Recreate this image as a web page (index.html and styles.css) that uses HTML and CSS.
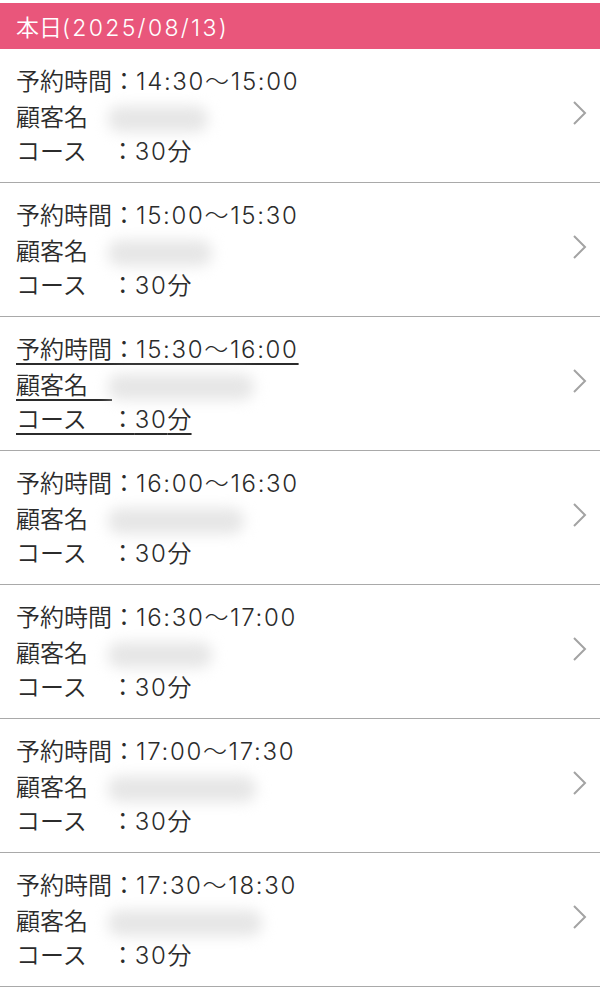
FILE: index.html
```html
<!DOCTYPE html>
<html lang="ja">
<head>
    <meta charset="UTF-8">
    <meta name="viewport" content="width=device-width, initial-scale=1.0">
    <title>本日の予約</title>
    <link rel="stylesheet" href="styles.css">
</head>
<body>
    <!-- 本日の予約一覧 -->
    <div class="day-header">本日<span class="val">(2025/08/13)</span></div>

    <ul class="reserve-list">
        <li class="reserve-item">
            <div class="reserve-info">
                <p>予約時間：<span class="val">14:30〜15:00</span></p>
                <p>顧客名　<span class="masked" style="width: 100px"></span></p>
                <p>コース　：<span class="val">30</span>分</p>
            </div>
            <svg class="chevron" viewBox="0 0 16 26"><polyline points="2,2 13,13 2,24"/></svg>
        </li>
        <li class="reserve-item">
            <div class="reserve-info">
                <p>予約時間：<span class="val">15:00〜15:30</span></p>
                <p>顧客名　<span class="masked" style="width: 104px"></span></p>
                <p>コース　：<span class="val">30</span>分</p>
            </div>
            <svg class="chevron" viewBox="0 0 16 26"><polyline points="2,2 13,13 2,24"/></svg>
        </li>
        <li class="reserve-item visited">
            <div class="reserve-info">
                <p>予約時間：<span class="val">15:30〜16:00</span></p>
                <p>顧客名　<span class="masked" style="width: 146px"></span></p>
                <p>コース　：<span class="val">30</span>分</p>
            </div>
            <svg class="chevron" viewBox="0 0 16 26"><polyline points="2,2 13,13 2,24"/></svg>
        </li>
        <li class="reserve-item">
            <div class="reserve-info">
                <p>予約時間：<span class="val">16:00〜16:30</span></p>
                <p>顧客名　<span class="masked" style="width: 136px"></span></p>
                <p>コース　：<span class="val">30</span>分</p>
            </div>
            <svg class="chevron" viewBox="0 0 16 26"><polyline points="2,2 13,13 2,24"/></svg>
        </li>
        <li class="reserve-item">
            <div class="reserve-info">
                <p>予約時間：<span class="val">16:30〜17:00</span></p>
                <p>顧客名　<span class="masked" style="width: 104px"></span></p>
                <p>コース　：<span class="val">30</span>分</p>
            </div>
            <svg class="chevron" viewBox="0 0 16 26"><polyline points="2,2 13,13 2,24"/></svg>
        </li>
        <li class="reserve-item">
            <div class="reserve-info">
                <p>予約時間：<span class="val">17:00〜17:30</span></p>
                <p>顧客名　<span class="masked" style="width: 148px"></span></p>
                <p>コース　：<span class="val">30</span>分</p>
            </div>
            <svg class="chevron" viewBox="0 0 16 26"><polyline points="2,2 13,13 2,24"/></svg>
        </li>
        <li class="reserve-item">
            <div class="reserve-info">
                <p>予約時間：<span class="val">17:30〜18:30</span></p>
                <p>顧客名　<span class="masked" style="width: 154px"></span></p>
                <p>コース　：<span class="val">30</span>分</p>
            </div>
            <svg class="chevron" viewBox="0 0 16 26"><polyline points="2,2 13,13 2,24"/></svg>
        </li>
    </ul>
</body>
</html>
```

FILE: styles.css
```css
body {
    margin: 0;
    padding-top: 3px;
    background-color: #fff;
    color: #2b2b2b;
    font-family: 'Noto Sans CJK JP', 'Noto Sans', sans-serif;
    font-weight: 350;
}

.day-header {
    height: 46px;
    line-height: 46px;
    padding: 0 16px;
    background-color: #e9567b;
    color: #fff;
    font-size: 23px;
}

/* 数字部分は字間を広めに */
.val {
    font-family: Inter, 'Noto Sans CJK JP', sans-serif;
    font-weight: 300;
    letter-spacing: 0.07em;
}

.day-header .val {
    letter-spacing: 0.1em;
}

.reserve-list {
    list-style: none;
    margin: 0;
    padding: 0;
}

.reserve-item {
    display: flex;
    align-items: center;
    height: 133px;
    padding: 0 12px 0 16px;
    border-bottom: 1px solid #a9a9a9;
}

.reserve-info {
    flex-grow: 1;
}

.reserve-info p {
    margin: 0;
    font-size: 24px;
    line-height: 34px;
    white-space: nowrap;
}

/* 既読の行は下線付き */
.visited .reserve-info p {
    text-decoration: underline;
    text-underline-offset: 5px;
    text-decoration-thickness: 1.5px;
}

.masked {
    display: inline-block;
    height: 26px;
    vertical-align: middle;
    margin-left: -4px;
    background-color: #e6e6e6;
    border-radius: 12px;
    filter: blur(7px);
}

.chevron {
    width: 16px;
    height: 26px;
    flex-shrink: 0;
    margin-bottom: 6px;
}

.chevron polyline {
    fill: none;
    stroke: #a3a3a3;
    stroke-width: 2;
}
```
